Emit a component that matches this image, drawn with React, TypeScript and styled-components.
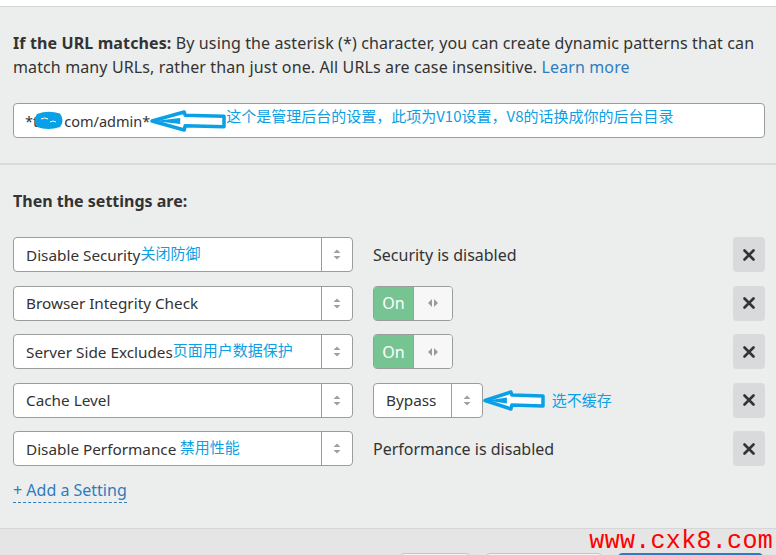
import React from "react";
import styled, { createGlobalStyle } from "styled-components";

const Global = createGlobalStyle`
  html, body { margin: 0; padding: 0; background: #ffffff; }
  body {
    font-family: "Noto Sans", "Noto Sans CJK SC", sans-serif;
    color: #333333;
    -webkit-font-smoothing: antialiased;
  }
  * { box-sizing: border-box; }
`;

const Page = styled.div`
  position: relative;
  width: 776px;
  height: 555px;
  overflow: hidden;
  background: #ffffff;
  padding-top: 6px;
`;

const Panel = styled.div`
  border-top: 1px solid #d4d5d5;
  background: #eceeed;
`;

const UrlSection = styled.section`
  padding: 24px 11px 25px 13px;
  border-bottom: 2px solid #d9dada;
`;

const Intro = styled.p`
  margin: 0;
  font-size: 16px;
  line-height: 24px;
  letter-spacing: 0.12px;
  color: #333;
`;

const Strong = styled.strong`
  font-weight: 700;
`;

const Link = styled.a`
  color: #2f7bbf;
  text-decoration: none;
`;

const UrlBox = styled.div`
  margin-top: 24px;
  height: 35px;
  border: 1px solid #9c9c9c;
  border-radius: 4px;
  background: #fff;
  display: flex;
  align-items: center;
  padding: 0 11px;
  font-size: 14.5px;
  color: #333;
  white-space: nowrap;
`;

const Note = styled.span<{ $lift?: number }>`
  font-family: "Noto Sans CJK SC", "Noto Sans", sans-serif;
  font-size: 15px;
  color: #0d9fe3;
  margin-bottom: ${(p) => (p.$lift ?? 0) * 2}px;
  white-space: nowrap;
`;

const SettingsSection = styled.section`
  padding: 24px 11px 25px 13px;
  border-bottom: 1px solid #d6d6d6;
`;

const Title = styled.h3`
  margin: 0;
  font-size: 16px;
  line-height: 24px;
  font-weight: 700;
  color: #333;
`;

const Rows = styled.div`
  margin-top: 24px;
  display: flex;
  flex-direction: column;
  gap: 13.5px;
`;

const Row = styled.div`
  display: grid;
  grid-template-columns: 340px 1fr 32px;
  column-gap: 20px;
  align-items: center;
`;

const Select = styled.div<{ $width?: number }>`
  height: 35px;
  width: ${(p) => (p.$width ? `${p.$width}px` : "100%")};
  flex-shrink: 0;
  display: flex;
  border: 1px solid #9c9c9c;
  border-radius: 4px;
  background: #fff;
`;

const SelectLabel = styled.div`
  flex: 1;
  display: flex;
  align-items: center;
  padding-left: 12px;
  font-size: 15.3px;
  color: #333;
  white-space: nowrap;
  overflow: hidden;
`;

const SelectArrows = styled.div`
  width: 31px;
  border-left: 1px solid #9c9c9c;
  display: flex;
  align-items: center;
  justify-content: center;
`;

const ValueCell = styled.div`
  display: flex;
  align-items: center;
  font-size: 16px;
  color: #333;
`;

const Toggle = styled.div`
  display: flex;
  height: 35px;
  width: 80px;
  border: 1px solid #9c9c9c;
  border-radius: 4px;
  overflow: hidden;
`;

const ToggleOn = styled.div`
  width: 40px;
  background: #77c493;
  color: #fff;
  font-size: 16px;
  display: flex;
  align-items: center;
  justify-content: center;
  border-right: 1px solid #9c9c9c;
`;

const ToggleHandle = styled.div`
  flex: 1;
  background: #f7f7f7;
  display: flex;
  align-items: center;
  justify-content: center;
`;

const RemoveButton = styled.button`
  width: 32px;
  height: 35px;
  padding: 0;
  border: 0;
  border-radius: 4px;
  background: #d9dadb;
  display: flex;
  align-items: center;
  justify-content: center;
`;

const AddSetting = styled.a`
  display: inline-block;
  margin-top: 12px;
  font-size: 16px;
  line-height: 24px;
  color: #2f7bbf;
  border-bottom: 1px dashed #2f7bbf;
  text-decoration: none;
`;

const Footer = styled.div`
  background: #e5e5e5;
  padding: 24px 13px 24px 13px;
  display: flex;
  justify-content: flex-end;
  gap: 16px;
`;

const FooterButton = styled.button<{ $primary?: boolean; $width: number }>`
  width: ${(p) => p.$width}px;
  height: 36px;
  border-radius: 4px;
  border: 1px solid ${(p) => (p.$primary ? "#2f7bbf" : "#c4c4c4")};
  background: ${(p) => (p.$primary ? "#2f7bbf" : "#f4f4f4")};
`;

const Watermark = styled.div`
  position: absolute;
  right: 3px;
  bottom: 0px;
  font-family: "Liberation Mono", monospace;
  font-size: 25px;
  line-height: 27px;
  letter-spacing: 0.3px;
  color: #ff0000;
`;

const Blob = styled.svg`
  display: block;
  margin: 0 0 0 -5px;
`;

const UpDown = () => (
  <svg width="8" height="11" viewBox="0 0 8 11">
    <path d="M4 0.5 L7.5 4 L0.5 4 Z" fill="#a0a0a0" />
    <path d="M4 10.5 L7.5 7 L0.5 7 Z" fill="#a0a0a0" />
  </svg>
);

const LeftRight = () => (
  <svg width="10" height="8" viewBox="0 0 10 8">
    <path d="M0 4 L4 0 L4 8 Z" fill="#9a9a9a" />
    <path d="M10 4 L6 0 L6 8 Z" fill="#9a9a9a" />
  </svg>
);

const XIcon = () => (
  <svg width="12" height="12" viewBox="0 0 12 12">
    <path d="M1.5 1.5 L10.5 10.5 M10.5 1.5 L1.5 10.5" stroke="#333" strokeWidth="2.6" strokeLinecap="round" />
  </svg>
);

const HandArrow = ({ w, h }: { w: number; h: number }) => {
  const mid = h / 2;
  const head = w * 0.45;
  const sh = h * 0.26;
  return (
    <svg width={w} height={h} viewBox={`0 0 ${w} ${h}`} style={{ flexShrink: 0 }}>
      <path
        d={`M2 ${mid} L${head} 2 L${head + 1} ${mid - sh} L${w - 2} ${mid - sh + 1} L${w - 2} ${mid + sh} L${head + 1} ${mid + sh - 1} L${head} ${h - 2} Z`}
        fill="#ffffff"
        stroke="#0aa0e6"
        strokeWidth="3.5"
        strokeLinejoin="round"
      />
      <path d={`M4 ${mid} L${head - 4} ${mid - 3} L${head - 4} ${mid + 3} Z`} fill="#0aa0e6" />
    </svg>
  );
};

type Setting = {
  label: string;
  note?: string;
  noteGap?: boolean;
  value: React.ReactNode;
};

const OnToggle = () => (
  <Toggle>
    <ToggleOn>On</ToggleOn>
    <ToggleHandle>
      <LeftRight />
    </ToggleHandle>
  </Toggle>
);

const settings: Setting[] = [
  { label: "Disable Security", note: "关闭防御", value: <span>Security is disabled</span> },
  { label: "Browser Integrity Check", value: <OnToggle /> },
  { label: "Server Side Excludes", note: "页面用户数据保护", value: <OnToggle /> },
  {
    label: "Cache Level",
    value: (
      <>
        <Select $width={110}>
          <SelectLabel>Bypass</SelectLabel>
          <SelectArrows>
            <UpDown />
          </SelectArrows>
        </Select>
        <HandArrow w={62} h={21} />
        <Note $lift={1}>&nbsp;&nbsp;选不缓存</Note>
      </>
    ),
  },
  { label: "Disable Performance", note: "禁用性能", noteGap: true, value: <span>Performance is disabled</span> },
];

export default function App() {
  return (
    <Page>
      <Global />
      <Panel>
        <UrlSection>
          <Intro>
            <Strong>If the URL matches:</Strong> By using the asterisk (*) character, you can create dynamic patterns that can
            <br />
            match many URLs, rather than just one. All URLs are case insensitive. <Link>Learn more</Link>
          </Intro>
          <UrlBox>
            <span>*t</span>
            <Blob width="31" height="19" viewBox="0 0 31 19">
              <path d="M4 3 Q15 -1 27 2.5 Q32 9.5 27 16 Q15 20 4 16 Q-1 9.5 4 3 Z" fill="#0aa0e6" />
              <path d="M8 8 Q12 6 15 8 M17 11 Q20 9 23 11" stroke="#ffffff" strokeWidth="1" fill="none" />
            </Blob>
            <span>com/admin*</span>
            <HandArrow w={76} h={22} />
            <Note $lift={5}>这个是管理后台的设置，此项为V10设置，V8的话换成你的后台目录</Note>
          </UrlBox>
        </UrlSection>
        <SettingsSection>
          <Title>Then the settings are:</Title>
          <Rows>
            {settings.map((s) => (
              <Row key={s.label}>
                <Select>
                  <SelectLabel>
                    {s.label}
                    {s.note && (
                      <Note $lift={2}>
                        {s.noteGap ? "\u00a0" : ""}
                        {s.note}
                      </Note>
                    )}
                  </SelectLabel>
                  <SelectArrows>
                    <UpDown />
                  </SelectArrows>
                </Select>
                <ValueCell>{s.value}</ValueCell>
                <RemoveButton aria-label="Remove">
                  <XIcon />
                </RemoveButton>
              </Row>
            ))}
          </Rows>
          <AddSetting>+ Add a Setting</AddSetting>
        </SettingsSection>
        <Footer>
          <FooterButton $width={70} aria-label="Cancel" />
          <FooterButton $width={116} aria-label="Save as Draft" />
          <FooterButton $primary $width={145} aria-label="Save and Deploy" />
        </Footer>
      </Panel>
      <Watermark>www.cxk8.com</Watermark>
    </Page>
  );
}
